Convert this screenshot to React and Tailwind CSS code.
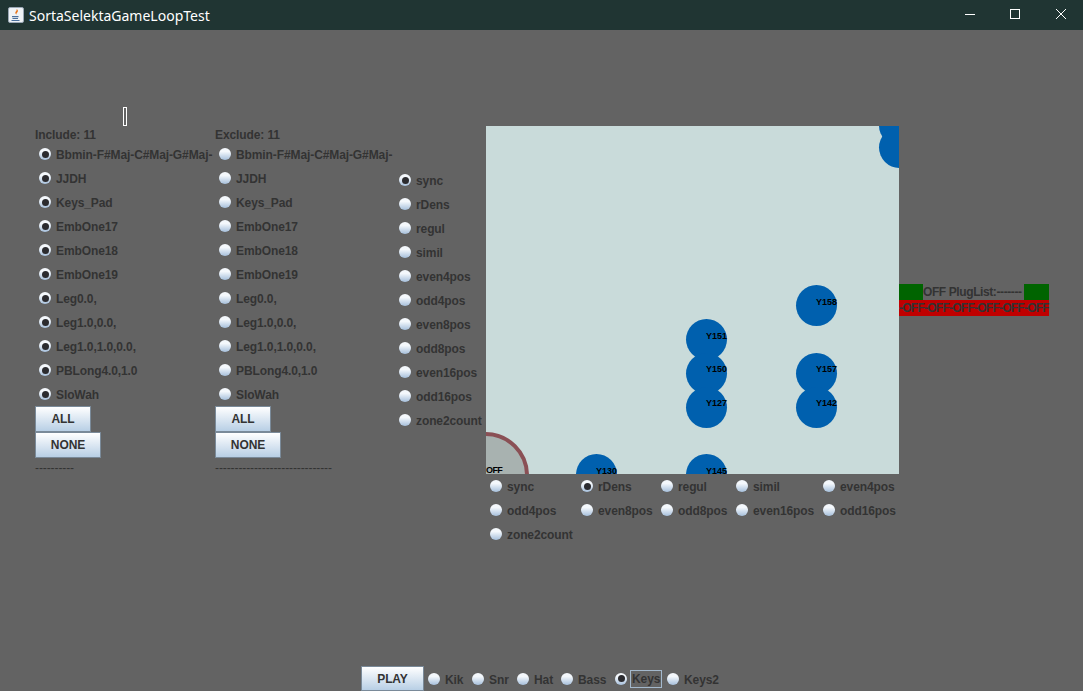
const labelFont = "font-['Liberation_Sans',Arial,sans-serif] font-bold text-[12px] text-[#333333] tracking-[-0.1px]";
const tagFont = "font-['Liberation_Sans',Arial,sans-serif] font-bold text-[9px] text-black";

const presets = ['Bbmin-F#Maj-C#Maj-G#Maj-', 'JJDH', 'Keys_Pad', 'EmbOne17', 'EmbOne18', 'EmbOne19', 'Leg0.0,', 'Leg1.0,0.0,', 'Leg1.0,1.0,0.0,', 'PBLong4.0,1.0', 'SloWah'];
const sideOptions = ['sync', 'rDens', 'regul', 'simil', 'even4pos', 'odd4pos', 'even8pos', 'odd8pos', 'even16pos', 'odd16pos', 'zone2count'];
const underOptions = [
    { label: 'sync' }, { label: 'rDens', on: true }, { label: 'regul' }, { label: 'simil' }, { label: 'even4pos' },
    { label: 'odd4pos' }, { label: 'even8pos' }, { label: 'odd8pos' }, { label: 'even16pos' }, { label: 'odd16pos' },
    { label: 'zone2count' },
];
// notes on the free canvas, place is the content here
const blobs = [
    { pos: 'left-[393px] top-[-21px]', label: '' },
    { pos: 'left-[393px] top-[1px]', label: '' },
    { pos: 'left-[310px] top-[159px]', label: 'Y158', tag: 'top-[12px]' },
    { pos: 'left-[200px] top-[193px]', label: 'Y151', tag: 'top-[12px]' },
    { pos: 'left-[200px] top-[227px]', label: 'Y150', tag: 'top-[11px]' },
    { pos: 'left-[200px] top-[261px]', label: 'Y127', tag: 'top-[11px]' },
    { pos: 'left-[310px] top-[227px]', label: 'Y157', tag: 'top-[11px]' },
    { pos: 'left-[310px] top-[261px]', label: 'Y142', tag: 'top-[11px]' },
    { pos: 'left-[90px] top-[328px]', label: 'Y130', tag: 'top-[12px]' },
    { pos: 'left-[200px] top-[328px]', label: 'Y145', tag: 'top-[12px]' },
];
const tracks = [
    { label: 'Kik', width: 'w-[44px]' },
    { label: 'Snr', width: 'w-[45px]' },
    { label: 'Hat', width: 'w-[44px]' },
    { label: 'Bass', width: 'w-[54px]' },
    { label: 'Keys', width: 'w-[52px]', on: true, focus: true },
    { label: 'Keys2', width: 'w-[60px]' },
];

const Radio = ({ on }) => (
    <span className="w-[12px] h-[12px] shrink-0 rounded-full bg-linear-to-b from-[#f4f8fc] from-30% to-[#a6bfdb] flex items-center justify-center">
        {on && <span className="w-[7px] h-[7px] rounded-full bg-[#2b2b2f]" />}
    </span>
);

const RadioRow = ({ label, on, className = '' }) => (
    <div className={`h-[24px] flex items-center gap-[5px] ${className}`}>
        <Radio on={on} />
        <span className={`${labelFont} pt-[2px] whitespace-nowrap`}>{label}</span>
    </div>
);

const MetalButton = ({ children, className = '' }) => (
    <button className={`border border-[#7a8a99] bg-linear-to-b from-white to-[#b8cfe5] flex items-center justify-center ${labelFont} ${className}`}>
        {children}
    </button>
);

const PresetColumn = ({ title, on, dashes, marker }) => (
    <div className="w-[180px] shrink-0 flex flex-col">
        <div className="h-[19px] mt-[77px]">
            {marker && <div className="ml-[88px] w-[4px] h-[19px] border border-white" />}
        </div>
        <div className={`h-[16px] pt-[2px] flex items-center ${labelFont}`}>{title}</div>
        {presets.map(p => <RadioRow key={p} label={p} on={on} className="pl-[4px]" />)}
        <MetalButton className="w-[56px] h-[26px]">ALL</MetalButton>
        <MetalButton className="w-[66px] h-[26px]">NONE</MetalButton>
        <div className={`mt-[1px] h-[18px] flex items-center ${labelFont} font-normal`}>{dashes}</div>
    </div>
);

const JavaIcon = () => (
    <svg width="16" height="16" viewBox="0 0 16 16" className="shrink-0">
        <rect x="0.5" y="0.5" width="15" height="15" rx="1.5" fill="#eef2f6" stroke="#9aa7b5" />
        <path d="M8.5 2c1 1.6-2 2.6-1 4.600.4.800 1 1 1 1-.5-1.500 2-2.500 1.300-4.300C9.500 2.700 9 2.300 8.500 2z" fill="#e8741a" />
        <path d="M4 9h6.500v1.200H4zM4.500 11h5.500v1H4.500zM3.500 13h8v1h-8z" fill="#4a6f9c" />
    </svg>
);

const App = () => {
    return (
        <div className="w-[1083px] h-[691px] overflow-hidden bg-[#636363] flex flex-col">
            {/* title bar */}
            <div className="h-[30px] shrink-0 bg-[#203533] flex items-center pl-[8px]">
                <JavaIcon />
                <span className="ml-[5px] font-['Noto_Sans',sans-serif] text-[14px] text-white">SortaSelektaGameLoopTest</span>
                <div className="ml-auto flex items-center pr-[17px] pb-[2px]">
                    <svg width="10" height="10" viewBox="0 0 10 10"><path d="M0 5.500h10" stroke="#fff" /></svg>
                    <svg width="10" height="10" viewBox="0 0 10 10" className="ml-[35px]"><rect x="0.500" y="0.500" width="9" height="9" fill="none" stroke="#fff" /></svg>
                    <svg width="10" height="10" viewBox="0 0 10 10" className="ml-[36px]"><path d="M0 0l10 10M10 0L0 10" stroke="#fff" /></svg>
                </div>
            </div>

            {/* main panels */}
            <div className="flex-1 min-h-0 flex items-start pl-[35px]">
                <PresetColumn title="Include: 11" on dashes="----------" marker />
                <PresetColumn title="Exclude: 11" dashes="------------------------------" />

                <div className="w-[91px] shrink-0 mt-[138px] pl-[4px]">
                    {sideOptions.map((o, i) => <RadioRow key={o} label={o} on={i === 0} />)}
                </div>

                <div className="w-[413px] shrink-0 mt-[96px]">
                    <div className="relative h-[348px] bg-[#c9dbda] overflow-hidden">
                        {blobs.map((b, i) => (
                            <div key={i} className={`absolute w-[41px] h-[41px] rounded-full bg-[#0060ae] ${b.pos}`}>
                                {b.label && (
                                    <span className={`absolute left-[20px] leading-[10px] ${tagFont} ${b.tag}`}>{b.label}</span>
                                )}
                            </div>
                        ))}
                        <div className="absolute left-[-44px] top-[306px] w-[87px] h-[87px] rounded-full bg-[#a8b2b0] border-[4px] border-[#8a5055]" />
                        <span className={`absolute left-[0px] top-[340px] leading-[9px] tracking-[-0.6px] ${tagFont}`}>OFF</span>
                    </div>
                    <div className="grid grid-cols-[91px_80px_75px_87px_80px] pl-[4px]">
                        {underOptions.map(o => <RadioRow key={o.label} label={o.label} on={o.on} />)}
                    </div>
                </div>

                <div className="w-[150px] shrink-0 mt-[254px]">
                    <div className="h-[16px] flex items-center">
                        <div className="w-[24px] h-full bg-[#006400]" />
                        <span className={`flex-1 whitespace-nowrap ${labelFont} tracking-[-0.4px]`}>OFF PlugList:-------</span>
                        <div className="w-[25px] h-full bg-[#006400]" />
                    </div>
                    <div className={`h-[16px] bg-[#c00000] whitespace-nowrap flex items-center ${labelFont} tracking-[-0.75px]`}>-OFF-OFF-OFF-OFF-OFF-OFF</div>
                </div>
            </div>

            {/* transport row */}
            <div className="h-[25px] shrink-0 flex items-center pl-[361px]">
                <MetalButton className="w-[63px] h-[25px] mr-[4px]">PLAY</MetalButton>
                {tracks.map(t => (
                    <div key={t.label} className={`flex items-center ${t.width} ${t.focus ? 'gap-[3px]' : 'gap-[5px]'}`}>
                        <Radio on={t.on} />
                        <span className={`${labelFont} whitespace-nowrap ${t.focus ? 'border border-[#a3b8cc] px-[1px] h-[18px] leading-[16px]' : 'pt-[2px]'}`}>{t.label}</span>
                    </div>
                ))}
            </div>
        </div>
    );
};

export default App;
